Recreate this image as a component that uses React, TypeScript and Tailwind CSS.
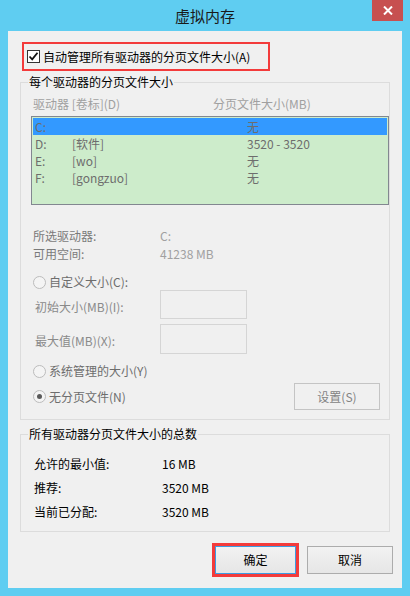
const FONT = "font-['Noto_Sans_CJK_SC','Noto_Sans',sans-serif]";

const DRIVES = [
  { letter: 'C:', label: '', size: '无', selected: true },
  { letter: 'D:', label: '[软件]', size: '3520 - 3520', selected: false },
  { letter: 'E:', label: '[wo]', size: '无', selected: false },
  { letter: 'F:', label: '[gongzuo]', size: '无', selected: false },
];

const TOTALS = [
  { label: '允许的最小值:', value: '16 MB' },
  { label: '推荐:', value: '3520 MB' },
  { label: '当前已分配:', value: '3520 MB' },
];

function Radio({ checked = false }: { checked?: boolean }) {
  return (
    <span className="w-[13px] h-[13px] rounded-full border border-[#bcbcbc] bg-[#f4f4f4] flex items-center justify-center flex-shrink-0">
      {checked && <span className="w-[5px] h-[5px] rounded-full bg-[#5a5a5a]" />}
    </span>
  );
}

export default function App() {
  return (
    <div className={`w-[410px] h-[596px] bg-[#5fcdf1] flex flex-col text-[12px] ${FONT}`}>
      {/* Title bar */}
      <div className="relative h-[31px] flex items-center justify-center flex-shrink-0">
        <span className="text-[15px] leading-[20px] text-[#1a1a1a] mt-[1px]">虚拟内存</span>
        <button className="absolute right-[7px] top-0 w-[31px] h-[21px] bg-[#c75050] flex items-center justify-center">
          <svg width="10" height="9" viewBox="0 0 10 9">
            <path d="M1 0.5 L9 8.5 M9 0.5 L1 8.5" stroke="#fff" strokeWidth="2" />
          </svg>
        </button>
      </div>

      {/* Client area */}
      <div className="mx-[8px] h-[557px] bg-[#f0f0f0] flex flex-col">
        {/* Auto-manage checkbox */}
        <div className="mt-[11px] ml-[14px] w-[248px] h-[29px] border-2 border-[#f33b3b] flex items-center pl-[3px] gap-[3px]">
          <span className="w-[13px] h-[13px] border border-[#333] bg-white flex items-center justify-center">
            <svg width="11" height="11" viewBox="0 0 11 11">
              <path d="M1.5 5.5 L4.2 8.3 L9.5 1.8" stroke="#111" strokeWidth="1.8" fill="none" />
            </svg>
          </span>
          <span className="leading-[16px] text-black">自动管理所有驱动器的分页文件大小(A)</span>
        </div>

        {/* Per-drive group */}
        <fieldset className="mt-[3px] ml-[12px] w-[370px] h-[346px] border border-[#dcdcdc] flex-shrink-0">
          <legend className="ml-[7px] px-[1px] leading-[16px] text-black">每个驱动器的分页文件大小</legend>

          <div className="mt-[6px] pl-[12px] flex leading-[16px] text-[#a0a0a0]">
            <span className="w-[180px]">驱动器 [卷标](D)</span>
            <span>分页文件大小(MB)</span>
          </div>

          <div className="mt-[4px] ml-[10px] w-[358px] h-[89px] border border-[#828790] bg-[#cdeccb] p-[1px]">
            {DRIVES.map(d => (
              <div
                key={d.letter}
                className={`h-[17px] flex items-center pl-[2px] text-[#6d6d6d] leading-[17px] ${d.selected ? 'bg-[#3399ff]' : ''}`}
              >
                <span className="w-[37px]">{d.letter}</span>
                <span className="w-[175px]">{d.label}</span>
                <span>{d.size}</span>
              </div>
            ))}
          </div>

          <div className="mt-[22px] pl-[12px] flex h-[18px] items-center">
            <span className="w-[127px] text-[#7a7a7a]">所选驱动器:</span>
            <span className="text-[#a0a0a0]">C:</span>
          </div>
          <div className="pl-[12px] flex h-[18px] items-center">
            <span className="w-[127px] text-[#7a7a7a]">可用空间:</span>
            <span className="text-[#a0a0a0]">41238 MB</span>
          </div>

          <div className="mt-[11px] pl-[12px] flex h-[16px] items-center gap-[3px] text-[#6d6d6d]">
            <Radio />
            <span>自定义大小(C):</span>
          </div>

          <div className="pl-[14px] flex items-center h-[29px]">
            <span className="w-[125px] text-[#8a8a8a] mt-[4px]">初始大小(MB)(I):</span>
            <span className="w-[87px] h-[29px] border border-[#d5d5d5]" />
          </div>
          <div className="mt-[5px] pl-[14px] flex items-center h-[30px]">
            <span className="w-[125px] text-[#8a8a8a] mt-[4px]">最大值(MB)(X):</span>
            <span className="w-[87px] h-[30px] border border-[#d5d5d5]" />
          </div>

          <div className="mt-[9px] pl-[12px] flex h-[16px] items-center gap-[3px] text-[#6d6d6d]">
            <Radio />
            <span>系统管理的大小(Y)</span>
          </div>

          <div className="mt-[4px] pl-[12px] pr-[9px] flex h-[27px] items-center">
            <div className="flex items-center gap-[3px] text-[#6d6d6d]">
              <Radio checked />
              <span>无分页文件(N)</span>
            </div>
            <button className="ml-auto w-[86px] h-[27px] border border-[#c4c4c4] bg-[#f0f0f0] text-[#838383]">
              设置(S)
            </button>
          </div>
        </fieldset>

        {/* Totals group */}
        <fieldset className="mt-[6px] ml-[12px] w-[370px] h-[106px] border border-[#dcdcdc] flex-shrink-0">
          <legend className="ml-[7px] px-[1px] leading-[16px] text-black">所有驱动器分页文件大小的总数</legend>
          <div className="mt-[10px]">
            {TOTALS.map(t => (
              <div key={t.label} className="pl-[13px] flex items-center h-[24px] text-black">
                <span className="w-[128px]">{t.label}</span>
                <span>{t.value}</span>
              </div>
            ))}
          </div>
        </fieldset>

        {/* Dialog buttons */}
        <div className="mt-[11px] flex items-center">
          <div className="ml-[204px] w-[87px] h-[34px] border-[3px] border-[#f33b3b]">
            <button className="w-full h-full border border-[#3c9be2] bg-gradient-to-b from-[#f2f2f2] to-[#e6e6e6] text-black">
              确定
            </button>
          </div>
          <button className="ml-[8px] w-[86px] h-[28px] border border-[#acacac] bg-gradient-to-b from-[#f2f2f2] to-[#e6e6e6] text-black">
            取消
          </button>
        </div>
      </div>
    </div>
  );
}
